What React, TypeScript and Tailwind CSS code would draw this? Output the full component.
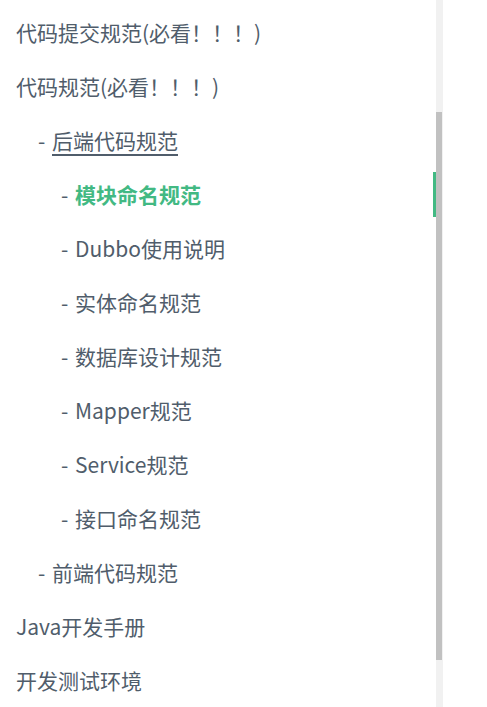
import React from "react";

interface NavItem {
  title: string;
  level: number;
  active?: boolean;
  underline?: boolean;
}

const items: NavItem[] = [
  { title: "代码提交规范(必看！！！)", level: 0 },
  { title: "代码规范(必看！！！)", level: 0 },
  { title: "后端代码规范", level: 1, underline: true },
  { title: "模块命名规范", level: 2, active: true },
  { title: "Dubbo使用说明", level: 2 },
  { title: "实体命名规范", level: 2 },
  { title: "数据库设计规范", level: 2 },
  { title: "Mapper规范", level: 2 },
  { title: "Service规范", level: 2 },
  { title: "接口命名规范", level: 2 },
  { title: "前端代码规范", level: 1 },
  { title: "Java开发手册", level: 0 },
  { title: "开发测试环境", level: 0 },
];

function SidebarItem({ item }: { item: NavItem }) {
  const indent =
    item.level === 0 ? "pl-[16px]" : item.level === 1 ? "pl-[38px]" : "pl-[61px]";

  return (
    <li className="h-[54px] flex items-center">
      <div
        className={`h-[45px] w-full flex items-center ${indent} ${
          item.active ? "border-r-[3px] border-[#42b983]" : ""
        }`}
      >
        {item.level > 0 && <span className="whitespace-pre mr-[2px]">- </span>}
        <a
          className={`whitespace-pre ${item.underline ? "underline decoration-2 underline-offset-[5px]" : ""} ${
            item.active ? "text-[#42b983] font-bold" : ""
          }`}
        >
          {item.title}
        </a>
      </div>
    </li>
  );
}

export default function App() {
  return (
    <div
      className="h-[707px] w-full flex bg-white overflow-hidden text-[#505d6b] text-[21px] leading-none"
      style={{ fontFamily: '"Noto Sans CJK SC", "Noto Sans", sans-serif' }}
    >
      {/* Sidebar list */}
      <ul className="w-[436px] pt-[5px]">
        {items.map((item) => (
          <SidebarItem key={item.title} item={item} />
        ))}
      </ul>

      {/* Scrollbar */}
      <div className="w-[7px] h-full bg-[#f1f1f1] pt-[112px]">
        <div className="w-[6px] h-[548px] bg-[#c1c1c1]" />
      </div>
    </div>
  );
}
